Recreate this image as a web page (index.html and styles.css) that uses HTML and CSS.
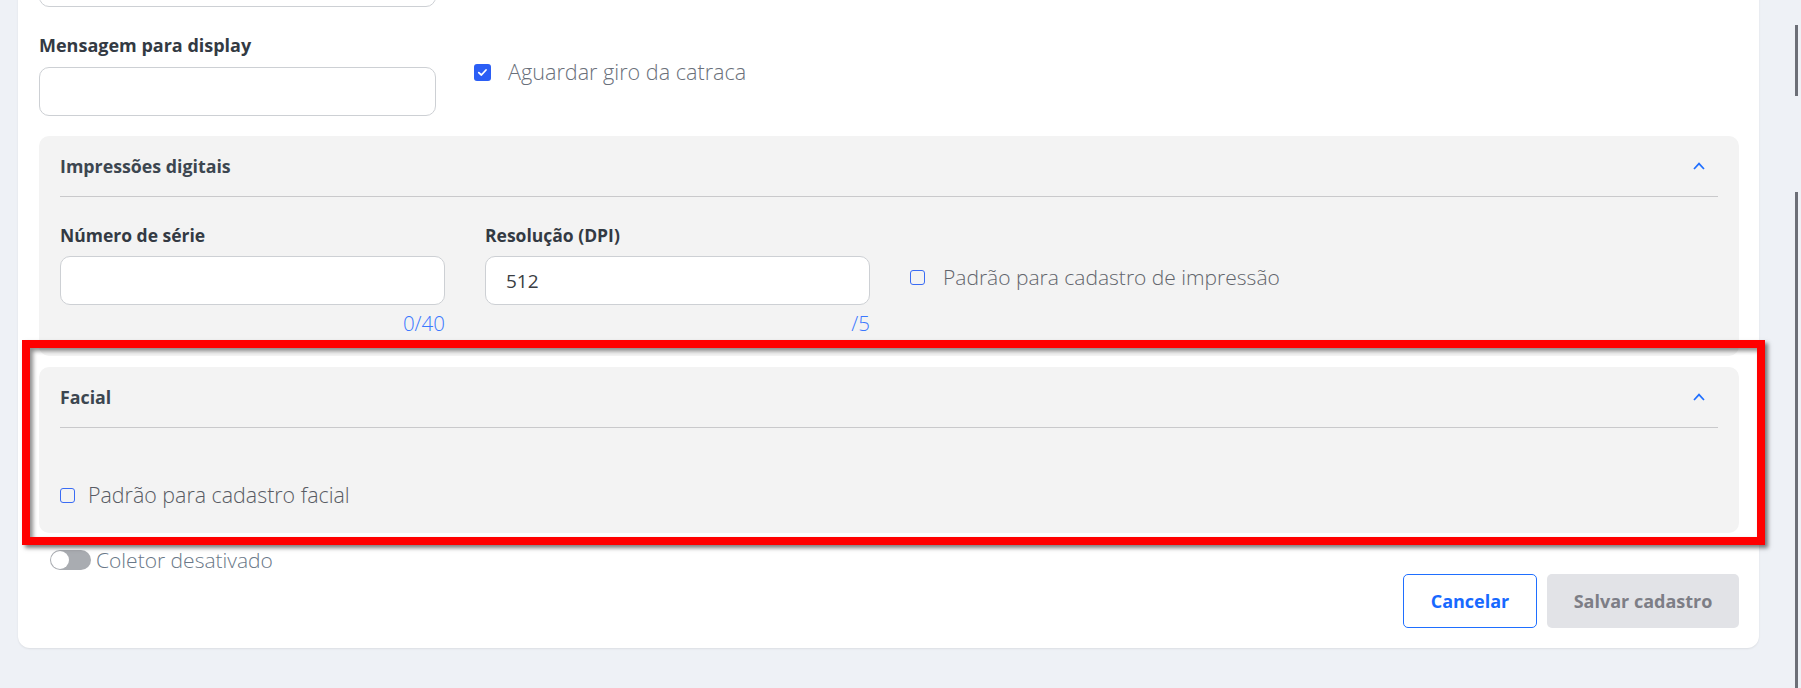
FILE: index.html
```html
<!DOCTYPE html>
<html lang="pt-BR">
<head>
    <meta charset="UTF-8">
    <meta name="viewport" content="width=device-width, initial-scale=1.0">
    <title>Cadastro de coletor</title>
    <link rel="stylesheet" href="styles.css">
</head>
<body>
    <div class="page">
        <main class="content">
            <div class="card">
                <div class="field field-wide">
                    <input type="text" class="input">
                </div>

                <div class="row">
                    <div class="field field-wide">
                        <label class="label label-lg" for="display">Mensagem para display</label>
                        <input type="text" id="display" class="input">
                    </div>
                    <label class="check check-top">
                        <span class="box box-checked">
                            <svg width="17" height="17" viewBox="0 0 17 17">
                                <path d="M4.8 8.6 L7.4 11 L12 6" fill="none" stroke="#fff" stroke-width="1.8" stroke-linecap="round" stroke-linejoin="round"/>
                            </svg>
                        </span>
                        <span class="check-text">Aguardar giro da catraca</span>
                    </label>
                </div>

                <section class="panel">
                    <header class="panel-head">
                        <h3 class="panel-title">Impressões digitais</h3>
                        <svg class="chevron" width="12" height="8" viewBox="0 0 12 8">
                            <polyline points="1,7 6,1.6 11,7" fill="none" stroke="#1f6fff" stroke-width="1.7"/>
                        </svg>
                    </header>
                    <div class="panel-body fields">
                        <div class="field field-mid">
                            <label class="label" for="serial">Número de série</label>
                            <input type="text" id="serial" class="input">
                            <span class="counter">0/40</span>
                        </div>
                        <div class="field field-mid">
                            <label class="label" for="dpi">Resolução (DPI)</label>
                            <input type="text" id="dpi" class="input" value="512">
                            <span class="counter">/5</span>
                        </div>
                        <label class="check check-print">
                            <span class="box"></span>
                            <span class="check-text">Padrão para cadastro de impressão</span>
                        </label>
                    </div>
                </section>

                <section class="panel panel-facial">
                    <header class="panel-head">
                        <h3 class="panel-title">Facial</h3>
                        <svg class="chevron" width="12" height="8" viewBox="0 0 12 8">
                            <polyline points="1,7 6,1.6 11,7" fill="none" stroke="#1f6fff" stroke-width="1.7"/>
                        </svg>
                    </header>
                    <div class="panel-body">
                        <label class="check check-facial">
                            <span class="box"></span>
                            <span class="check-text">Padrão para cadastro facial</span>
                        </label>
                    </div>
                </section>

                <div class="toggle-row">
                    <span class="toggle"><span class="knob"></span></span>
                    <span class="toggle-text">Coletor desativado</span>
                </div>

                <div class="actions">
                    <button type="button" class="btn btn-outline">Cancelar</button>
                    <button type="button" class="btn btn-disabled">Salvar cadastro</button>
                </div>
            </div>
        </main>

        <aside class="gutter">
            <span class="thumb thumb-top"></span>
            <span class="thumb thumb-main"></span>
        </aside>
    </div>

    <div class="highlight"></div>
</body>
</html>
```

FILE: styles.css
```css
body {
    margin: 0;
    font-family: "Open Sans", Arial, sans-serif;
    background-color: #eef1f6;
    height: 688px;
    overflow: hidden;
}

.page {
    display: flex;
    height: 688px;
}

.content {
    flex: 1;
    padding-left: 18px;
}

.card {
    background-color: #fff;
    margin-top: -62px;
    padding: 20px 20px 20px 21px;
    border-radius: 0 0 12px 12px;
    box-shadow: 0 1px 2px rgba(0, 0, 0, 0.08);
}

.field {
    display: flex;
    flex-direction: column;
}

.field-wide {
    width: 397px;
}

.field-mid {
    width: 385px;
}

.label {
    font-size: 17.5px;
    font-weight: 700;
    line-height: 20px;
    color: #333a43;
    margin-bottom: 12px;
}

.label-lg {
    font-size: 18px;
}

.input {
    box-sizing: border-box;
    height: 49px;
    width: 100%;
    border: 1px solid #cdd0d4;
    border-radius: 10px;
    background: #fff;
    padding: 0 20px;
    font-family: "Open Sans", Arial, sans-serif;
    font-size: 19px;
    font-weight: 400;
    color: #3a3d42;
}

.row {
    display: flex;
    align-items: flex-start;
    gap: 38px;
    margin-top: 28px;
}

/* checkbox + caption */
.check {
    display: flex;
    align-items: center;
    gap: 16px;
    height: 24px;
}

.check-top {
    margin-top: 25px;
    gap: 17px;
}

.check-top .check-text {
    font-size: 21.6px;
}

.box {
    box-sizing: border-box;
    width: 15px;
    height: 15px;
    border: 1.6px solid #3a6cf4;
    border-radius: 3px;
    flex-shrink: 0;
}

.box-checked {
    width: 17px;
    height: 17px;
    border: none;
    background-color: #2b5ef5;
    display: flex;
}

.check-text {
    font-size: 21px;
    font-weight: 300;
    color: #6a707a;
    line-height: 24px;
}

/* collapsible groups */
.panel {
    background-color: #f3f3f3;
    border-radius: 10px;
    padding: 0 21px;
    margin-top: 20px;
}

.panel-facial {
    margin-top: 11px;
}

.panel-head {
    display: flex;
    align-items: center;
    justify-content: space-between;
    height: 60px;
    border-bottom: 1px solid #c9c9cb;
}

.panel-title {
    margin: 0;
    font-size: 17.8px;
    font-weight: 700;
    color: #3c4650;
}

.chevron {
    margin-right: 13px;
}

.panel-body {
    padding: 55px 0 26px;
}

.fields {
    display: flex;
    align-items: flex-start;
    gap: 40px;
    padding: 28px 0 23px;
}

.fields .label {
    margin-bottom: 11px;
}

.counter {
    align-self: flex-end;
    margin-top: 8px;
    font-size: 20.5px;
    font-weight: 300;
    line-height: 20px;
    color: #3b78ff;
}

.check-print {
    margin-top: 40px;
    gap: 18px;
}

.check-print .check-text {
    color: #62656c;
}

.check-facial {
    gap: 13px;
}

.check-facial .check-text {
    font-size: 21.4px;
    color: #585b63;
}

/* on/off switch */
.toggle-row {
    display: flex;
    align-items: center;
    gap: 5px;
    height: 24px;
    margin: 15px 0 0 11px;
}

.toggle {
    display: flex;
    align-items: center;
    box-sizing: border-box;
    width: 41px;
    height: 20px;
    padding: 0 1px;
    border-radius: 10px;
    background-color: #a9acb1;
}

.knob {
    width: 18px;
    height: 18px;
    border-radius: 50%;
    background-color: #fff;
}

.toggle-text {
    font-size: 21px;
    font-weight: 300;
    color: #6a7888;
}

.actions {
    display: flex;
    justify-content: flex-end;
    gap: 10px;
    margin-top: 2px;
}

.btn {
    height: 54px;
    border-radius: 5px;
    font-family: "Open Sans", Arial, sans-serif;
    font-size: 18px;
    font-weight: 700;
    cursor: pointer;
}

.btn-outline {
    width: 134px;
    background-color: #fff;
    border: 1px solid #1f6fff;
    color: #1769ff;
}

.btn-disabled {
    width: 192px;
    background-color: #e2e3e7;
    border: none;
    color: #7d7e86;
}

/* scroll indicators on the right edge */
.gutter {
    width: 42px;
    display: flex;
    flex-direction: column;
}

.thumb {
    width: 3px;
    margin-left: 36px;
    background-color: #6c6f77;
}

.thumb-top {
    height: 71px;
    margin-top: 25px;
}

.thumb-main {
    flex: 1;
    margin-top: 96px;
}

/* annotation frame over the facial group */
.highlight {
    position: absolute;
    left: 22px;
    top: 340px;
    width: 1743px;
    height: 205px;
    box-sizing: border-box;
    border: 8px solid #ff0000;
    box-shadow: 3px 3px 4px rgba(0, 0, 0, 0.5), inset 3px 3px 4px rgba(0, 0, 0, 0.45);
    pointer-events: none;
}
```
